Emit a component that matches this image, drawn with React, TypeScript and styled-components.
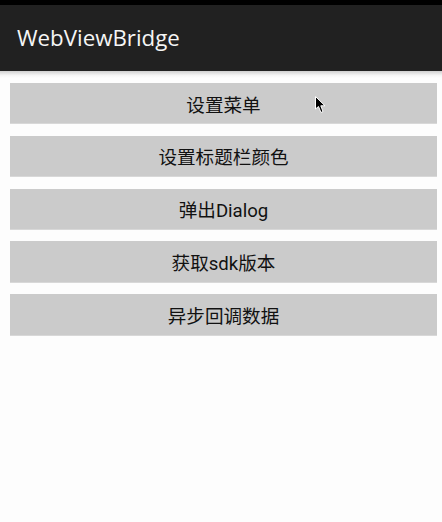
import React from "react";
import styled, { createGlobalStyle } from "styled-components";

const Global = createGlobalStyle`
  html, body { margin: 0; padding: 0; background: #fdfdfd; }
  body { width: 442px; height: 522px; overflow: hidden; }
`;

const Screen = styled.div`
  width: 442px;
  height: 522px;
  display: flex;
  flex-direction: column;
  background: #fdfdfd;
  position: relative;
`;

const StatusBar = styled.div`
  height: 5px;
  background: #000;
`;

const ActionBar = styled.div`
  height: 66px;
  background: #212121;
  display: flex;
  align-items: center;
  padding-left: 17px;
  padding-bottom: 1px;
  box-sizing: border-box;
`;

const Title = styled.h1`
  margin: 0;
  font-family: "Open Sans", "Noto Sans", sans-serif;
  font-weight: 400;
  font-size: 22.3px;
  color: #f5f5f5;
  letter-spacing: 0;
`;

const Shadow = styled.div`
  height: 7px;
  background: linear-gradient(#cfcfcf, #f4f4f4 60%, #fdfdfd);
`;

const List = styled.div`
  display: flex;
  flex-direction: column;
  gap: 11.4px;
  padding: 5px 5px 0 10px;
`;

const Button = styled.button`
  height: 41.4px;
  border: none;
  border-bottom: 1px solid #d8d8d8;
  background: #cbcbcb;
  padding: 0;
  display: flex;
  align-items: center;
  justify-content: center;
  font-family: Roboto, "Noto Sans CJK SC", sans-serif;
  font-size: 18.6px;
  color: #111;
  box-sizing: border-box;
`;

const Cursor = styled.svg`
  position: absolute;
  left: 315px;
  top: 96px;
`;

const items = ["设置菜单", "设置标题栏颜色", "弹出Dialog", "获取sdk版本", "异步回调数据"];

export default function App() {
  return (
    <Screen>
      <Global />
      <StatusBar />
      <ActionBar>
        <Title>WebViewBridge</Title>
      </ActionBar>
      <Shadow />
      <List>
        {items.map((t) => (
          <Button key={t}>{t}</Button>
        ))}
      </List>
      <Cursor width="12" height="18" viewBox="0 0 12 18">
        <path d="M0.5 0.5 L0.5 13 L3.5 10.5 L6 16.5 L8 15.5 L5.8 9.8 L10 9.8 Z" fill="#000" stroke="#fff" strokeWidth="1" />
      </Cursor>
    </Screen>
  );
}
